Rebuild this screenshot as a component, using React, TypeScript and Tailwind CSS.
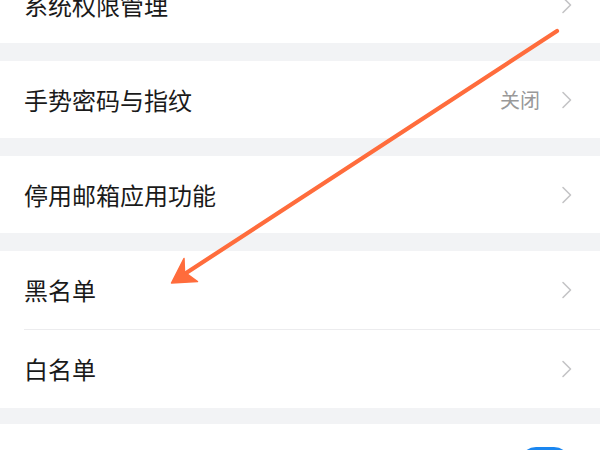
import React from "react";

const font = { fontFamily: '"Noto Sans CJK SC", "Noto Sans", sans-serif' };

function Chevron() {
	return (
		<svg width="12" height="18" viewBox="0 0 12 18" fill="none" className="shrink-0">
			<path d="M2 1.5 L9.5 9 L2 16.5" stroke="#c4c4c6" strokeWidth="1.6" strokeLinecap="round" strokeLinejoin="round" />
		</svg>
	);
}

function Row({ label, value, className = "h-[77px]" }: { label: string; value?: string; className?: string }) {
	return (
		<div className={`flex items-center bg-white pl-6 pr-[27px] ${className}`}>
			<span className="flex-1 text-[24px] leading-none text-[#1a1a1a]">{label}</span>
			{value && <span className="mr-[21px] text-[20px] leading-none text-[#999999]">{value}</span>}
			<Chevron />
		</div>
	);
}

function Gap({ h = "h-[18px]" }: { h?: string }) {
	return <div className={`${h} bg-[#f2f3f5]`} />;
}

export default function App() {
	return (
		<div className="relative h-[450px] w-[600px] overflow-hidden bg-[#f2f3f5]" style={font}>
			<div className="-mt-[34px]">
				<Row label="系统权限管理" />
				<Gap />
				<Row label="手势密码与指纹" value="关闭" />
				<Gap />
				<Row label="停用邮箱应用功能" />
				<Gap />
				<div className="bg-white">
					<Row label="黑名单" className="h-[78px]" />
					<div className="ml-6 h-px bg-[#ececee]" />
					<Row label="白名单" className="h-[78px]" />
				</div>
				<Gap h="h-[16px]" />
				<div className="flex h-[78px] items-center justify-end bg-white pr-[30px]">
					<div className="h-8 w-[50px] rounded-full bg-[#1a86f0]" />
				</div>
			</div>

			<svg className="pointer-events-none absolute inset-0" width="600" height="450" viewBox="0 0 600 450">
				<line x1="557" y1="31" x2="180" y2="277" stroke="#ff6c3c" strokeWidth="4.2" strokeLinecap="round" />
				<path d="M171.5 283 L184 258.5 L184.5 272 L197.5 281.5 Z" fill="#ff6c3c" stroke="#ff6c3c" strokeWidth="1.5" strokeLinejoin="round" />
			</svg>
		</div>
	);
}
